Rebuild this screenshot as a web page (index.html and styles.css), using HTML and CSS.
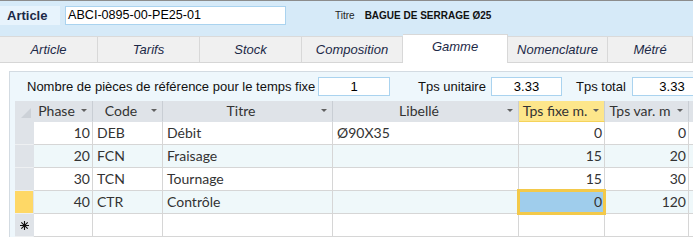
FILE: index.html
```html
<!DOCTYPE html>
<html lang="fr">
<head>
    <meta charset="UTF-8">
    <title>Article - Gamme</title>
    <link rel="stylesheet" href="styles.css">
</head>
<body>

    <div class="topbar">
        <div class="art-label">Article</div>
        <div class="field art-code">ABCI-0895-00-PE25-01</div>
        <span class="titre-label">Titre</span>
        <span class="titre-value">BAGUE DE SERRAGE Ø25</span>
    </div>

    <div class="tabs">
        <div class="tab">Article</div>
        <div class="tab">Tarifs</div>
        <div class="tab">Stock</div>
        <div class="tab">Composition</div>
        <div class="tab active">Gamme</div>
        <div class="tab">Nomenclature</div>
        <div class="tab">Métré</div>
    </div>

    <div class="sheet">
        <div class="panel">
            <div class="params">
                <label class="p-label p1">Nombre de pièces de référence pour le temps fixe</label>
                <div class="field num n1">1</div>
                <label class="p-label p2">Tps unitaire</label>
                <div class="field num n2">3.33</div>
                <label class="p-label p3">Tps total</label>
                <div class="field num n3">3.33</div>
            </div>

            <div class="grid">
                <div class="c h sel corner">
                    <svg width="10" height="10" viewBox="0 0 10 10"><polygon points="10,0 10,10 0,10" fill="#ccd1d7"/></svg>
                </div>
                <div class="c h"><span>Phase</span><i class="arrow"></i></div>
                <div class="c h"><span>Code</span><i class="arrow"></i></div>
                <div class="c h"><span>Titre</span><i class="arrow"></i></div>
                <div class="c h"><span>Libellé</span><i class="arrow"></i></div>
                <div class="c h hot"><span>Tps fixe m.</span><i class="arrow"></i></div>
                <div class="c h"><span>Tps var. m</span><i class="arrow"></i></div>
                <div class="c h"></div>

                <div class="c sel"></div>
                <div class="c r">10</div>
                <div class="c">DEB</div>
                <div class="c">Débit</div>
                <div class="c">Ø90X35</div>
                <div class="c r">0</div>
                <div class="c r">0</div>
                <div class="c"></div>

                <div class="c sel"></div>
                <div class="c r alt">20</div>
                <div class="c alt">FCN</div>
                <div class="c alt">Fraisage</div>
                <div class="c alt"></div>
                <div class="c r alt">15</div>
                <div class="c r alt">20</div>
                <div class="c alt"></div>

                <div class="c sel"></div>
                <div class="c r">30</div>
                <div class="c">TCN</div>
                <div class="c">Tournage</div>
                <div class="c"></div>
                <div class="c r">15</div>
                <div class="c r">30</div>
                <div class="c"></div>

                <div class="c sel current"></div>
                <div class="c r alt">40</div>
                <div class="c alt">CTR</div>
                <div class="c alt">Contrôle</div>
                <div class="c alt"></div>
                <div class="c r cur">0</div>
                <div class="c r alt">120</div>
                <div class="c alt"></div>

                <div class="c sel star">
                    <svg width="9" height="9" viewBox="0 0 9 9"><path d="M4.5 0V9M0 4.5H9M1.3 1.3L7.7 7.7M7.7 1.3L1.3 7.7" stroke="#111" stroke-width="1.1"/></svg>
                </div>
                <div class="c"></div>
                <div class="c"></div>
                <div class="c"></div>
                <div class="c"></div>
                <div class="c"></div>
                <div class="c"></div>
                <div class="c"></div>
            </div>
        </div>
    </div>

</body>
</html>
```

FILE: styles.css
```css
body { margin: 0; width: 693px; height: 240px; overflow: hidden; background: #fff; font-family: "Liberation Sans", Arial, sans-serif; font-size: 13px; color: #1c2947; }

/* top bar */
.topbar { display: flex; align-items: flex-start; height: 36px; padding-top: 5px; box-sizing: border-box; border-top: 1px solid #8c8c8c; background: #d6eaf8; }
.art-label { width: 60px; height: 19px; padding-left: 7px; box-sizing: border-box; background: #e7f3fc; font-weight: bold; line-height: 19px; }
.field { flex-shrink: 0; height: 19px; box-sizing: border-box; border: 1px solid #aad3ef; background: #fff; color: #000; line-height: 17px; }
.art-code { width: 221px; margin-left: 5px; padding-left: 2px; font-size: 12.6px; }
.titre-label { margin-left: 49px; font-size: 10px; line-height: 19px; color: #222; }
.titre-value { margin-left: 10px; font-size: 10px; font-weight: bold; line-height: 19px; color: #111; }

/* tabs */
.tabs { display: grid; grid-template-columns: 98px 102px 102px 101px 105px 100px 1fr; height: 27px; box-sizing: border-box; border-top: 1px solid #dadada; border-bottom: 1px solid #d6d6d6; background: #f0f0f0; }
.tab { border-right: 1px solid #d8d8d8; font-style: italic; text-align: center; line-height: 25px; }
.tab.active { margin-top: -3px; margin-bottom: -1px; border-top: 1px solid #d8d8d8; background: #fff; line-height: 24px; }

/* sheet */
.sheet { padding: 8px 0 0 9px; }
.panel { width: 700px; border-top: 1px solid #d3dbe2; border-left: 1px solid #d3dbe2; background: #eef7fc; padding-left: 5px; }
.params { display: flex; align-items: center; height: 29px; color: #111; }
.p-label { flex-shrink: 0; box-sizing: border-box; white-space: nowrap; }
.p1 { width: 303px; padding-left: 12px; }
.p2 { width: 101px; padding-left: 28px; }
.p3 { width: 70px; padding-left: 14px; }
.num { text-align: center; font-size: 13px; }
.n1 { width: 72px; }
.n2 { width: 71px; }
.n3 { width: 80px; }

/* datasheet */
.grid { display: grid; grid-template-columns: 19px 59px 70px 170px 186px 86px 84px 80px; font-family: Lato, "Open Sans", sans-serif; font-size: 14px; color: #333; }
.c { height: 23px; box-sizing: border-box; border-right: 1px solid #d6d6d6; border-bottom: 1px solid #d6d6d6; background: #fff; padding: 0 4px; line-height: 22px; white-space: nowrap; overflow: hidden; }
.c.r { text-align: right; padding-right: 2px; }
.c.alt { background: #eff8fa; }
.c.h { display: flex; align-items: center; height: 21px; padding: 0; background: #dfe3e8; border-right-color: #c9ced4; border-bottom-color: #dfe3e8; line-height: 20px; }
.c.h span { flex: 1; text-align: center; }
.arrow { width: 0; height: 0; margin: 0 5px 1px 2px; border-left: 3px solid transparent; border-right: 3px solid transparent; border-top: 3px solid #606060; }
.c.h.hot { background: #fde68b; border-bottom-color: #f5d35a; }
.c.sel { padding: 0; background: #dfe3e8; border-right-color: #dfe3e8; border-bottom-color: #eef0f2; }
.c.sel.corner { display: flex; align-items: flex-end; justify-content: flex-end; padding: 0 2px 3px 0; border-bottom-color: #dfe3e8; }
.c.sel.current { background: #fed866; }
.c.sel.star { display: flex; align-items: center; justify-content: center; }
.c.cur { position: relative; overflow: visible; background: #9fcdec; }
.c.cur::after { content: ''; position: absolute; left: -2px; top: -2px; right: -2px; bottom: -2px; border: 3px solid #f3c94a; }
```
